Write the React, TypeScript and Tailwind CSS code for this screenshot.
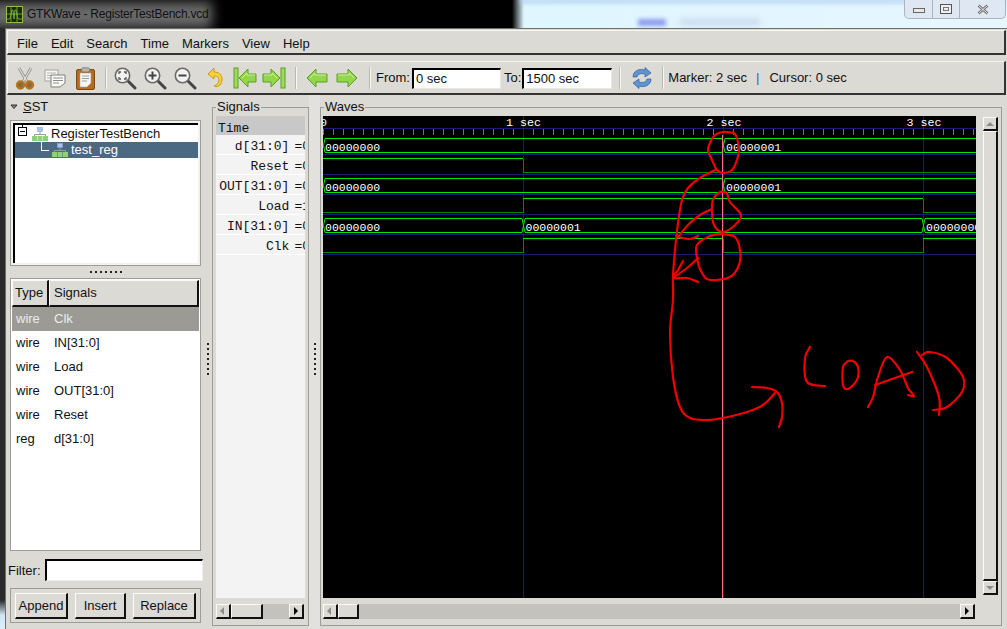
import React from "react";

const smooth = (p: number[][], closed = false) => {
  const n = p.length;
  const at = (i: number) => (closed ? p[(i + n) % n] : p[Math.max(0, Math.min(n - 1, i))]);
  let d = `M${p[0][0]},${p[0][1]}`;
  const last = closed ? n : n - 1;
  for (let i = 0; i < last; i++) {
    const a = at(i - 1), b = at(i), c = at(i + 1), e = at(i + 2);
    d += ` C${b[0] + (c[0] - a[0]) / 6},${b[1] + (c[1] - a[1]) / 6} ${c[0] - (e[0] - b[0]) / 6},${c[1] - (e[1] - b[1]) / 6} ${c[0]},${c[1]}`;
  }
  return d;
};

const scribbles: number[][][] = [
  [[734, 133], [723, 132], [715, 135], [710, 143], [708, 150], [712, 160], [717, 170], [723, 173], [732, 170], [737, 160], [739, 150], [737, 138], [734, 133]],
  [[715, 170], [700, 178], [688, 188], [682, 200], [678, 223], [675, 250], [673, 277], [673, 300], [670, 333], [673, 377], [680, 407], [690, 418], [707, 420], [723, 418], [747, 412], [763, 405], [775, 393]],
  [[752, 387], [767, 388], [777, 392], [782, 403], [782, 417], [779, 427]],
  [[727, 193], [720, 192], [713, 200], [712, 210], [714, 225], [723, 232], [735, 225], [741, 215], [730, 202], [727, 193]],
  [[712, 209], [700, 215], [688, 225], [678, 237]],
  [[698, 236], [690, 239], [678, 237]],
  [[723, 234], [710, 236], [697, 245], [697, 258], [702, 273], [710, 280], [730, 277], [739, 265], [740, 250], [735, 237], [723, 234]],
  [[698, 258], [687, 268], [673, 278]],
  [[683, 261], [678, 270], [673, 278], [687, 278], [698, 282]],
  [[810, 347], [805, 358], [807, 382], [825, 386]],
  [[848, 361], [843, 367], [843, 385], [848, 389], [857, 380], [858, 367], [853, 361], [848, 361]],
  [[868, 407], [873, 397], [878, 377], [887, 357], [900, 370], [908, 388], [914, 396], [908, 395]],
  [[875, 385], [912, 372]],
  [[917, 352], [927, 367], [939, 397], [939, 415]],
  [[922, 355], [930, 352], [947, 358], [963, 377], [962, 392], [947, 407], [933, 410]],
];

const BRIGHT = "#00e800";
const DARK = "#008a00";

function Bus({ y, cuts, labels }: { y: number; cuts: number[]; labels: [number, string][] }) {
  const t = y + 0.5, b = y + 14.5;
  const starts = [325, ...cuts.map((c) => c + 2)];
  const ends = [...cuts.map((c) => c - 1), 976];
  return (
    <g>
      {starts.map((s, i) => (
        <path key={i} d={`M${s},${t} H${ends[i]} M${s},${b} H${ends[i]}`} stroke={BRIGHT} fill="none" />
      ))}
      <path d={`M323.5,${y + 7.5} L325,${t} M323.5,${y + 7.5} L325,${b}`} stroke={BRIGHT} fill="none" />
      {cuts.map((c) => (
        <path key={c} d={`M${c - 1},${t} L${c + 2},${b} M${c - 1},${b} L${c + 2},${t}`} stroke={BRIGHT} fill="none" />
      ))}
      {labels.map(([x, s]) => (
        <text key={x} x={x} y={y + 12.5} fill="#ffffff" fontSize="11.5" fontFamily="'Liberation Mono', monospace">
          {s}
        </text>
      ))}
    </g>
  );
}

function Wire({ y, v }: { y: number; v: [number, number][] }) {
  const hi = y + 0.5, lo = y + 14.5;
  return (
    <g fill="none">
      {v.map(([x, l], i) => {
        const end = i + 1 < v.length ? v[i + 1][0] : 976;
        return (
          <g key={i}>
            <path d={`M${x},${l ? hi : lo} H${end}`} stroke={l ? BRIGHT : DARK} />
            {i + 1 < v.length && <path d={`M${end + 0.5},${hi} V${lo}`} stroke={DARK} />}
          </g>
        );
      })}
    </g>
  );
}

function WaveCanvas() {
  const ticks: number[] = [];
  for (let x = 323; x < 976; x += 10) ticks.push(x + 0.5);
  return (
    <svg width="653" height="482" viewBox="323 116 653 482" className="block bg-black" shapeRendering="geometricPrecision">
      <g shapeRendering="crispEdges">
        {ticks.map((x) => (
          <path key={x} d={`M${x},129 V135`} stroke="#70708a" />
        ))}
        {[128, 154, 174, 194, 214, 234, 254].map((y) => (
          <path key={y} d={`M323,${y + 0.5} H976`} stroke="#1c1c78" />
        ))}
        {[523, 723, 923].map((x) => (
          <path key={x} d={`M${x + 0.5},116 V598`} stroke="#1c1c78" />
        ))}
      </g>
      {[[320, "0"], [506, "1 sec"], [706.5, "2 sec"], [906.5, "3 sec"]].map(([x, s]) => (
        <text key={s as string} x={x as number} y="126" fill="#fff" fontSize="11.67" fontFamily="'Liberation Mono', monospace">
          {s}
        </text>
      ))}
      <g shapeRendering="crispEdges">
        <Wire y={158} v={[[323, 1], [523, 0]]} />
        <Wire y={198} v={[[323, 0], [523, 1], [923, 0]]} />
        <Wire y={238} v={[[323, 0], [523, 1], [723, 0], [923, 1]]} />
      </g>
      <Bus y={138} cuts={[723]} labels={[[325, "00000000"], [726, "00000001"]]} />
      <Bus y={178} cuts={[723]} labels={[[325, "00000000"], [726, "00000001"]]} />
      <Bus y={218} cuts={[523, 923]} labels={[[325, "00000000"], [525.5, "00000001"], [926, "00000000"]]} />
      <path d="M722.5,135 V598" stroke="#ff7088" shapeRendering="crispEdges" />
      <g fill="none" stroke="#f00000" strokeWidth="2.2" strokeLinecap="round" strokeLinejoin="round">
        {scribbles.map((s, i) => (
          <path key={i} d={smooth(s)} />
        ))}
      </g>
    </svg>
  );
}

const raised = "border border-t-[#fbfbf9] border-l-[#fbfbf9] border-r-[#111] border-b-[#111] border-r-2 border-b-2 bg-[#dbdad5]";

function Arrow({ dir, active }: { dir: "l" | "r" | "u" | "d"; active?: boolean }) {
  const d = { l: "M6,1 L2,5 L6,9 Z", r: "M3,1 L7,5 L3,9 Z", u: "M1,7 L5,3 L9,7 Z", d: "M1,3 L5,7 L9,3 Z" }[dir];
  return (
    <svg width="10" height="10" viewBox="0 0 10 10">
      <path d={d} fill={active ? "#000" : "#8d8c87"} />
    </svg>
  );
}

function ArrowBtn({ dir, active, tall }: { dir: "l" | "r" | "u" | "d"; active?: boolean; tall?: boolean }) {
  return (
    <div className={`${raised} w-[15px] ${tall ? "h-[14px]" : "h-[15px]"} shrink-0 flex items-center justify-center`}>
      <Arrow dir={dir} active={active} />
    </div>
  );
}

function HScroll({ thumb }: { thumb: string }) {
  return (
    <div className="flex h-[15px] bg-[#c3c2bc] w-full">
      <ArrowBtn dir="l" />
      <div className={`${raised} ${thumb} h-[15px]`} />
      <div className="flex-1" />
      <ArrowBtn dir="r" active />
    </div>
  );
}

function Dots({ vertical }: { vertical?: boolean }) {
  return (
    <div className={`flex ${vertical ? "flex-col" : "flex-row"} gap-[3px]`}>
      {[0, 1, 2, 3, 4, 5, 6].map((i) => (
        <div key={i} className="w-[2px] h-[2px] bg-[#222]" />
      ))}
    </div>
  );
}

function Hier({ className }: { className?: string }) {
  return (
    <svg width="16" height="14" viewBox="0 0 16 14" className={className}>
      <rect x="5.5" y="0.5" width="5" height="4" fill="#a9c4ea" stroke="#8aa6d0" strokeWidth="0.6" />
      <path d="M8,5 V7.5 M2.5,9 V7.5 H13.5 V9" stroke="#9a9a9a" fill="none" />
      {[0, 5.5, 11].map((x) => (
        <rect key={x} x={x} y="9" width="5" height="5" fill="#8ed07a" />
      ))}
    </svg>
  );
}

function Sep({ className }: { className: string }) {
  return <div className={`w-[2px] h-[22px] bg-[#f7f7f4] border-l border-[#b9b8b3] shrink-0 ${className}`} />;
}

function ToolIcon({ children }: { children: React.ReactNode }) {
  return <div className="w-[30px] h-[28px] flex items-center justify-center shrink-0">{children}</div>;
}

function Lens({ sign }: { sign: "fit" | "in" | "out" }) {
  return (
    <svg width="24" height="24" viewBox="0 0 24 24">
      <path d="M14,14 L22,22" stroke="#444" strokeWidth="3" strokeLinecap="round" />
      <circle cx="9.5" cy="9.5" r="7.2" fill="#f2f2f0" stroke="#6a6a6a" strokeWidth="1.6" />
      {sign === "fit" && <path d="M6,8 V6 H8 M11,6 H13 V8 M13,11 V13 H11 M8,13 H6 V11" stroke="#555" strokeWidth="1.3" fill="none" />}
      {sign !== "fit" && <path d="M5.5,9.5 H13.5" stroke="#444" strokeWidth="2" />}
      {sign === "in" && <path d="M9.5,5.5 V13.5" stroke="#444" strokeWidth="2" />}
    </svg>
  );
}

function GreenArrow({ flip, bar }: { flip?: boolean; bar?: boolean }) {
  return (
    <svg width="24" height="22" viewBox="0 0 24 22" style={flip ? { transform: "scaleX(-1)" } : undefined}>
      {bar && <rect x="1" y="1" width="4" height="20" fill="#9ddc5a" stroke="#5c9e22" />}
      <path
        d={bar ? "M6,11 L15,2 V7 H23 V15 H15 V20 Z" : "M2,11 L11,2 V7 H22 V15 H11 V20 Z"}
        fill="#93d64e"
        stroke="#5c9e22"
        strokeLinejoin="round"
      />
      <path d={bar ? "M9,11 L14,6 V8 H22" : "M5,11 L10,6 V8 H21"} stroke="#c9f09a" fill="none" />
    </svg>
  );
}

const rows = [
  ["wire", "Clk"],
  ["wire", "IN[31:0]"],
  ["wire", "Load"],
  ["wire", "OUT[31:0]"],
  ["wire", "Reset"],
  ["reg", "d[31:0]"],
];

const sigs = [
  ["d[31:0]", "=0"],
  ["Reset", "=0"],
  ["OUT[31:0]", "=0"],
  ["Load", "=1"],
  ["IN[31:0]", "=0"],
  ["Clk", "=0"],
];

export default function App() {
  return (
    <div className="relative w-[1007px] h-[629px] overflow-hidden flex flex-col bg-[linear-gradient(180deg,#2a2a2a_0,#2a2a2a_600px,#cfe4f5_615px,#e0eefa_100%)] text-[13px] leading-4 text-[#111] font-['Liberation_Sans',Arial,sans-serif]">
      {/* Title bar */}
      <div className="relative h-[28px] shrink-0 overflow-hidden bg-[linear-gradient(90deg,#000_0,#000_512px,#dff6ff_524px,#e6f6ff_100%)]">
        <div className="absolute left-[-10px] top-[2px] w-[222px] h-[26px] bg-[#6a6a6a] blur-[6px]" />
        <div className="absolute left-[520px] top-0 w-[487px] h-[3px] bg-[#a9caf2] blur-[2px]" />
        <div className="absolute left-[638px] top-[19px] w-[28px] h-[7px] bg-[#8c9cf0] blur-[2px]" />
        <div className="absolute left-[680px] top-[19px] w-[80px] h-[6px] bg-[#c6d6ee] blur-[3px]" />
        <div className="relative flex items-center h-[28px] pl-[6px] gap-[4px]">
          <svg width="17" height="17" viewBox="0 0 17 17">
            <rect x="0.5" y="0.5" width="16" height="16" fill="#1c2a10" stroke="#8fbf4a" />
            <path d="M1,13 H4 L6,4 H7 L8,13 L9,4 H10 L12,13 H16 M1,8 H16 M5,1 V16 M11,1 V16" stroke="#7fc040" strokeWidth="0.8" fill="none" />
          </svg>
          <span className="text-[12px] tracking-[-0.22px] text-[#101010]">GTKWave - RegisterTestBench.vcd</span>
        </div>
      </div>

      {/* Window controls */}
      <div className="absolute left-[904px] top-0 w-[102px] h-[19px] flex border border-t-0 border-[#a9b4c2] rounded-b-[5px] bg-[#dfe8f2]">
        <div className="w-[28px] flex items-center justify-center border-r border-[#a9b4c2]">
          <div className="w-[12px] h-[5px] mt-[3px] border border-[#666] bg-[#e8e8e8]" />
        </div>
        <div className="w-[27px] flex items-center justify-center border-r border-[#a9b4c2]">
          <div className="w-[12px] h-[10px] border border-[#555] flex items-center justify-center bg-[#eef1f4]">
            <div className="w-[6px] h-[4px] border border-[#777]" />
          </div>
        </div>
        <div className="flex-1 flex items-center justify-center">
          <svg width="12" height="11" viewBox="0 0 12 11">
            <path d="M1.5,1.5 L10.5,9.5 M10.5,1.5 L1.5,9.5" stroke="#666" strokeWidth="2.6" />
            <path d="M1.5,1.5 L10.5,9.5 M10.5,1.5 L1.5,9.5" stroke="#f2f2f2" strokeWidth="1" />
          </svg>
        </div>
      </div>

      {/* Window body */}
      <div className="flex-1 ml-[5px] flex flex-col bg-[#dbdad5] border-l border-t border-[#6f6f6c] min-h-0">
        <div className="mt-[1px] ml-[1px] mr-[1px] h-[25px] shrink-0 flex items-center gap-[13px] pl-[9px] pt-[3px] border-l border-t border-r-2 border-b-2 border-l-[#f5f5f2] border-t-[#f5f5f2] border-r-[#333] border-b-[#333]">
          {["File", "Edit", "Search", "Time", "Markers", "View", "Help"].map((m) => (
            <span key={m}>{m}</span>
          ))}
        </div>

        <div className="mt-[6px] ml-[1px] mr-[1px] h-[34px] shrink-0 flex items-center pl-[2px] pt-[1px] border-l border-t border-r-2 border-b-2 border-l-[#f5f5f2] border-t-[#f5f5f2] border-r-[#333] border-b-[#333]">
          <ToolIcon>
            <svg width="20" height="23" viewBox="0 0 20 23">
              <path d="M4,1 L12,15 M16,1 L8,15" stroke="#9e9e9a" strokeWidth="3" fill="none" />
              <path d="M4,1 L12,15 M16,1 L8,15" stroke="#e6e6e2" strokeWidth="1" fill="none" />
              <circle cx="5.5" cy="18" r="3.6" fill="#8a6a3a" stroke="#b8741e" strokeWidth="2.2" />
              <circle cx="14.5" cy="18" r="3.6" fill="#8a6a3a" stroke="#b8741e" strokeWidth="2.2" />
            </svg>
          </ToolIcon>
          <ToolIcon>
            <svg width="22" height="19" viewBox="0 0 22 19">
              <rect x="1" y="1" width="13" height="11" fill="#f4f4f2" stroke="#a5a5a0" />
              <path d="M3,4 H12 M3,6.5 H12 M3,9 H12" stroke="#b4b4b0" />
              <path d="M7,6 H21 V14 L16,18 H7 Z" fill="#fafaf8" stroke="#7f7f7a" />
              <path d="M9,9 H19 M9,11.5 H19 M9,14 H15" stroke="#8d8d88" />
            </svg>
          </ToolIcon>
          <ToolIcon>
            <svg width="19" height="23" viewBox="0 0 19 23">
              <rect x="0.5" y="2.5" width="18" height="20" rx="1.5" fill="#b66c20" stroke="#7d4a16" />
              <path d="M4,6 H15 V16 L11,20 H4 Z" fill="#f5f5f2" stroke="#aaa" strokeWidth="0.6" />
              <path d="M6,9 H13 M6,11.5 H13 M6,14 H11" stroke="#9d9d98" />
              <rect x="5.5" y="0.8" width="8" height="4.2" rx="1.5" fill="#b5b5b0" stroke="#6e6e6a" strokeWidth="0.7" />
            </svg>
          </ToolIcon>
          <Sep className="ml-[5px] mr-[3px]" />
          <ToolIcon><Lens sign="fit" /></ToolIcon>
          <ToolIcon><Lens sign="in" /></ToolIcon>
          <ToolIcon><Lens sign="out" /></ToolIcon>
          <ToolIcon>
            <svg width="16" height="22" viewBox="0 0 16 22">
              <path d="M7,1 L1,7 L7,12 V9 C11,9 12,11 12,13 C12,16 10,18 7,19 C12,21 15,17 15,12 C15,7 11,5 7,5 Z" fill="#f7d23e" stroke="#c99a10" strokeLinejoin="round" />
            </svg>
          </ToolIcon>
          <ToolIcon><GreenArrow bar /></ToolIcon>
          <div className="-ml-[1px]"><ToolIcon><GreenArrow bar flip /></ToolIcon></div>
          <Sep className="ml-[6px] mr-[5px]" />
          <ToolIcon><GreenArrow /></ToolIcon>
          <ToolIcon><GreenArrow flip /></ToolIcon>
          <Sep className="ml-[7px] mr-[5px]" />
          <span>From:</span>
          <div className="ml-[2px] w-[89px] h-[21px] bg-white border-t-2 border-l-2 border-black border-r border-b border-r-[#e8e8e4] border-b-[#e8e8e4] pl-[2px] flex items-center">0 sec</div>
          <span className="ml-[3px]">To:</span>
          <div className="ml-[1px] w-[90px] h-[21px] bg-white border-t-2 border-l-2 border-black border-r border-b border-r-[#e8e8e4] border-b-[#e8e8e4] pl-[2px] flex items-center">1500 sec</div>
          <Sep className="ml-[7px] mr-[11px]" />
          <svg width="20" height="22" viewBox="0 0 20 22">
            <path d="M1,10 C1,4 7,1 13,3 V0.5 L19,6 L13,10 V7 C8,6 6,7 5,10 Z" fill="#5e94d0" stroke="#2f6099" strokeWidth="0.7" strokeLinejoin="round" />
            <path d="M19,12 C19,18 13,21 7,19 V21.5 L1,16 L7,12 V15 C12,16 14,15 15,12 Z" fill="#5e94d0" stroke="#2f6099" strokeWidth="0.7" strokeLinejoin="round" />
          </svg>
          <Sep className="ml-[10px] mr-[4px]" />
          <span>Marker: 2 sec</span>
          <span className="ml-[9px] text-[#2b6aa8]">|</span>
          <span className="ml-[10px]">Cursor: 0 sec</span>
        </div>

        <div className="flex-1 min-h-0 flex">
          {/* Left column */}
          <div className="w-[200px] shrink-0 flex flex-col pl-[4px] pr-[5px]">
            <div className="h-[25px] flex items-start pt-[4px] shrink-0">
              <svg width="8" height="16" viewBox="0 0 8 16">
                <path d="M1,6 H7 L4,9.5 Z" fill="#888" stroke="#222" strokeWidth="0.9" />
              </svg>
              <span className="ml-[5px]"><span className="underline">S</span>ST</span>
            </div>
            <div className="h-[146px] shrink-0 border border-[#9d9c96] p-[2px] bg-[#f2f2ef]">
              <div className="h-full bg-white border-t-2 border-l-2 border-black overflow-hidden">
                <div className="relative h-[17px] flex items-center">
                  <div className="absolute left-[3px] top-[2px] w-[9px] h-[9px] border border-black bg-white flex items-center justify-center">
                    <div className="w-[5px] h-[1px] bg-black" />
                  </div>
                  <div className="absolute left-[7px] top-[-4px] w-[1px] h-[6px] bg-black" />
                  <Hier className="ml-[17px]" />
                  <span className="ml-[3px]">RegisterTestBench</span>
                </div>
                <div className="relative h-[16px] flex items-center bg-[#4b6983] text-white">
                  <div className="absolute left-[26px] top-0 w-[8px] h-[9px] border-l border-b border-white" />
                  <Hier className="ml-[37px]" />
                  <span className="ml-[3px]">test_reg</span>
                </div>
              </div>
            </div>
            <div className="h-[12px] shrink-0 flex items-center justify-center">
              <Dots />
            </div>
            <div className="h-[273px] shrink-0 border border-[#9d9c96] p-[1px] bg-white flex flex-col overflow-hidden">
              <div className="flex h-[27px] shrink-0">
                <div className={`${raised} w-[37px] flex items-center pl-[2px]`}>Type</div>
                <div className={`${raised} flex-1 flex items-center pl-[4px]`}>Signals</div>
              </div>
              {rows.map(([t, s], i) => (
                <div key={s} className={`h-[24px] shrink-0 flex items-center pl-[4px] ${i === 0 ? "bg-[#9c9a94] text-[#ececec]" : ""}`}>
                  <span className="w-[38px]">{t}</span>
                  <span>{s}</span>
                </div>
              ))}
            </div>
            <div className="mt-[8px] h-[22px] shrink-0 flex items-center">
              <span className="-ml-[2px] pt-[1px]">Filter:</span>
              <div className="ml-[4px] w-[158px] h-[22px] -mr-[10px] bg-white border-t-2 border-l-2 border-black border-r border-b border-r-[#eee] border-b-[#eee] shrink-0" />
            </div>
            <div className="mt-[7px] h-[35px] shrink-0 border border-[#9d9c96] flex items-start gap-[7px] pl-[4px] pt-[4px]">
              <button className={`${raised} w-[53px] h-[26px] pt-[1px]`}>Append</button>
              <button className={`${raised} w-[51px] h-[26px] pt-[1px]`}>Insert</button>
              <button className={`${raised} w-[63px] h-[26px] pt-[1px]`}>Replace</button>
            </div>
          </div>

          {/* Handle */}
          <div className="w-[6px] shrink-0 flex items-center justify-center">
            <div className="mt-[-6px] ml-[-3px]"><Dots vertical /></div>
          </div>

          {/* Signals */}
          <div className="relative w-[97px] shrink-0 mt-[12px] mb-[3px] border border-[#9d9c96] px-[3px] pt-[8px] flex flex-col">
            <span className="absolute left-[3px] top-[-9px] bg-[#dbdad5] px-[1px]">Signals</span>
            <div className="h-[19px] shrink-0 bg-[#c8c8c8] flex items-center pl-[2px] pt-[6px] font-['Liberation_Mono',monospace] text-[13px]">Time</div>
            <div className="h-[463px] shrink-0 bg-[#f3f3f3] overflow-hidden">
              {sigs.map(([s, v]) => (
                <div key={s} className="h-[20px] flex items-center justify-end pt-[4px] border-b border-white overflow-hidden font-['Liberation_Mono',monospace] text-[13px] whitespace-nowrap">
                  <span>{s}</span>
                  <span className="ml-[5px] -mr-[5px]">{v}</span>
                </div>
              ))}
            </div>
            <div className="mt-[6px] pr-[1px]">
              <HScroll thumb="w-[32px]" />
            </div>
          </div>

          {/* Handle */}
          <div className="w-[11px] shrink-0 flex items-center justify-center bg-[#e2e1dd]">
            <div className="mt-[-6px] mr-[-1px]"><Dots vertical /></div>
          </div>

          {/* Waves */}
          <div className="relative w-[682px] shrink-0 mt-[12px] mb-[3px] border border-[#9d9c96] pl-[2px] pt-[8px]">
            <span className="absolute left-[3px] top-[-9px] bg-[#dbdad5] px-[1px]">Waves</span>
            <div className="flex">
              <WaveCanvas />
              <div className="ml-[7px] mt-[1px] w-[15px] flex flex-col">
                <ArrowBtn dir="u" tall />
                <div className={`${raised} h-[450px]`} />
                <ArrowBtn dir="d" tall />
              </div>
            </div>
            <div className="mt-[6px] w-[652px]">
              <HScroll thumb="w-[21px]" />
            </div>
          </div>
        </div>
      </div>
    </div>
  );
}
